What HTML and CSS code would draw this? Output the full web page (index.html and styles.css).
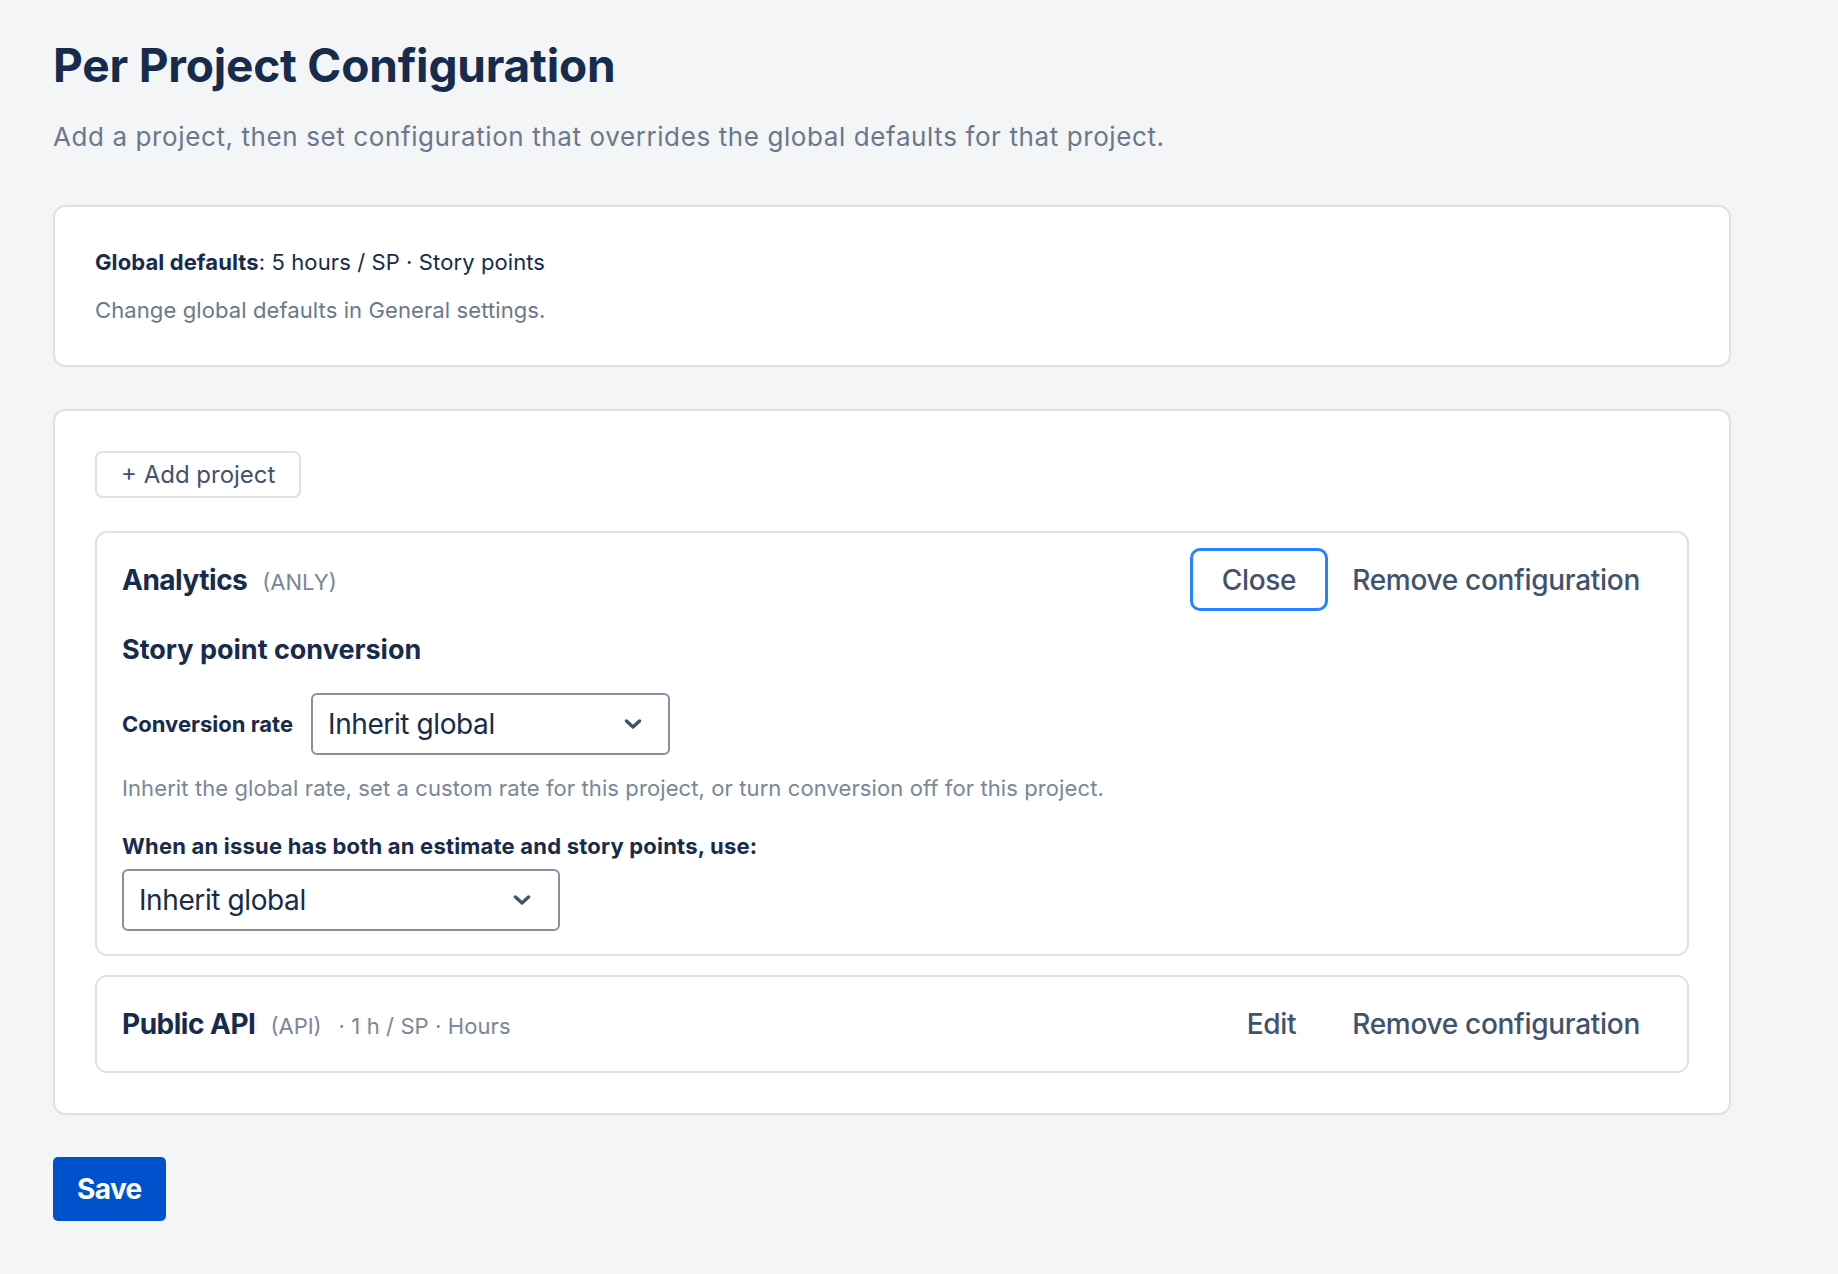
FILE: index.html
```html
<!DOCTYPE html>
<html lang="en">
<head>
<meta charset="utf-8">
<title>Per Project Configuration</title>
<link rel="stylesheet" href="styles.css">
</head>
<body>
<main class="page">
  <h1 class="title">Per Project Configuration</h1>
  <p class="subtitle">Add a project, then set configuration that overrides the global defaults for that project.</p>

  <section class="card defaults">
    <p class="defaults-line"><strong>Global defaults</strong>: 5 hours / SP · Story points</p>
    <p class="defaults-note">Change global defaults in General settings.</p>
  </section>

  <section class="card projects-card">
    <button class="add-btn" type="button">+ Add project</button>

    <div class="projects">
      <div class="project">
        <div class="proj-head">
          <div class="proj-title">
            <span class="proj-name">Analytics</span>
            <span class="proj-key">(ANLY)</span>
          </div>
          <div class="actions">
            <button class="btn-sub focused" type="button">Close</button>
            <button class="btn-sub remove" type="button">Remove configuration</button>
          </div>
        </div>

        <h3 class="section-title">Story point conversion</h3>
        <div class="rate-row">
          <span class="field-label">Conversion rate</span>
          <div class="select select-rate">
            <span class="select-value">Inherit global</span>
            <svg class="chev" width="18" height="10" viewBox="0 0 18 10" aria-hidden="true"><polyline points="2.5,2 9,8 15.5,2" fill="none" stroke="#42526e" stroke-width="3.4" stroke-linecap="round" stroke-linejoin="round"/></svg>
          </div>
        </div>
        <p class="help">Inherit the global rate, set a custom rate for this project, or turn conversion off for this project.</p>

        <p class="field-label block-label">When an issue has both an estimate and story points, use:</p>
        <div class="select select-use">
          <span class="select-value">Inherit global</span>
          <svg class="chev" width="18" height="10" viewBox="0 0 18 10" aria-hidden="true"><polyline points="2.5,2 9,8 15.5,2" fill="none" stroke="#42526e" stroke-width="3.4" stroke-linecap="round" stroke-linejoin="round"/></svg>
        </div>
      </div>

      <div class="project collapsed">
        <div class="proj-head">
          <div class="proj-title">
            <span class="proj-name">Public API</span>
            <span class="proj-key">(API)</span>
            <span class="proj-key meta">· 1 h / SP · Hours</span>
          </div>
          <div class="actions">
            <button class="btn-sub" type="button">Edit</button>
            <button class="btn-sub remove" type="button">Remove configuration</button>
          </div>
        </div>
      </div>
    </div>
  </section>

  <button class="save-btn" type="button">Save</button>
</main>
</body>
</html>
```

FILE: styles.css
```css
* { box-sizing: border-box; }

body {
  margin: 0;
  background: #f4f5f7;
  font-family: Inter, "Noto Sans", "Liberation Sans", sans-serif;
  color: #172b4d;
}

.page {
  width: 1731px;
  padding: 38px 0 60px 53px;
}

.title {
  margin: 0;
  font-size: 46px;
  line-height: 55px;
  font-weight: 700;
  letter-spacing: -0.2px;
  color: #172b4d;
}

.subtitle {
  margin: 26px 0 0;
  font-size: 26px;
  line-height: 35px;
  letter-spacing: 0.6px;
  color: #6b778c;
}

.card {
  background: #fff;
  border: 2px solid #dfe1e6;
  border-radius: 12px;
  padding: 40px;
}

.defaults {
  margin-top: 51px;
}

.defaults-line,
.defaults-note {
  margin: 0;
  font-size: 22px;
  line-height: 30px;
  letter-spacing: 0.1px;
}

.defaults-line strong {
  font-weight: 700;
}

.defaults-note {
  margin-top: 18px;
  color: #6b778c;
}

.projects-card {
  margin-top: 42px;
}

.add-btn {
  font-family: inherit;
  font-size: 24px;
  line-height: 29px;
  padding: 7px 24px;
  border: 2px solid #dfe1e6;
  border-radius: 7px;
  background: #fff;
  color: #42526e;
  cursor: pointer;
}

.projects {
  margin-top: 33px;
  display: flex;
  flex-direction: column;
  gap: 19px;
}

.project {
  border: 2px solid #dfe1e6;
  border-radius: 12px;
  padding: 15px 21px 23px 25px;
}

.project.collapsed {
  padding-bottom: 16px;
}

.proj-head {
  display: flex;
  align-items: center;
  justify-content: space-between;
}

.proj-title {
  display: flex;
  align-items: baseline;
  gap: 15px;
}

.proj-name {
  font-size: 28px;
  line-height: 34px;
  font-weight: 700;
  letter-spacing: -0.5px;
  color: #172b4d;
}

.proj-key {
  font-size: 22px;
  color: #7a869a;
}

.proj-key.meta {
  margin-left: 2px;
  letter-spacing: 0.1px;
}

.actions {
  display: flex;
  align-items: center;
}

.btn-sub {
  height: 63px;
  font-family: inherit;
  font-size: 28px;
  font-weight: 500;
  letter-spacing: -0.3px;
  color: #42526e;
  background: transparent;
  border: 3px solid transparent;
  border-radius: 10px;
  padding: 0 29px;
  cursor: pointer;
}

.btn-sub.focused {
  border-color: #2684ff;
  background: #fff;
}

.btn-sub.remove {
  padding: 0 23px 0 21px;
}

.section-title {
  margin: 22px 0 0;
  font-size: 27px;
  line-height: 34px;
  font-weight: 700;
  color: #172b4d;
}

.rate-row {
  margin-top: 26px;
  display: flex;
  align-items: center;
  gap: 18px;
}

.field-label {
  font-size: 22px;
  line-height: 30px;
  font-weight: 700;
  color: #172b4d;
}

.select {
  height: 62px;
  display: flex;
  align-items: center;
  justify-content: space-between;
  border: 2px solid #8590a2;
  border-radius: 6px;
  background: #fff;
  padding: 0 26px 0 15px;
}

.select-rate {
  width: 359px;
}

.select-use {
  width: 438px;
  padding-right: 27px;
}

.select-value {
  font-size: 28px;
  letter-spacing: -0.4px;
  color: #172b4d;
}

.chev {
  display: block;
}

.help {
  margin: 18px 0 0;
  font-size: 22px;
  line-height: 30px;
  letter-spacing: 0.1px;
  color: #7a869a;
}

.block-label {
  margin: 28px 0 8px;
  letter-spacing: 0.2px;
}

.save-btn {
  margin-top: 42px;
  font-family: inherit;
  font-size: 28px;
  line-height: 34px;
  font-weight: 700;
  letter-spacing: -0.6px;
  color: #fff;
  background: #0052cc;
  border: none;
  border-radius: 5px;
  padding: 15px 24px;
  cursor: pointer;
}
```
